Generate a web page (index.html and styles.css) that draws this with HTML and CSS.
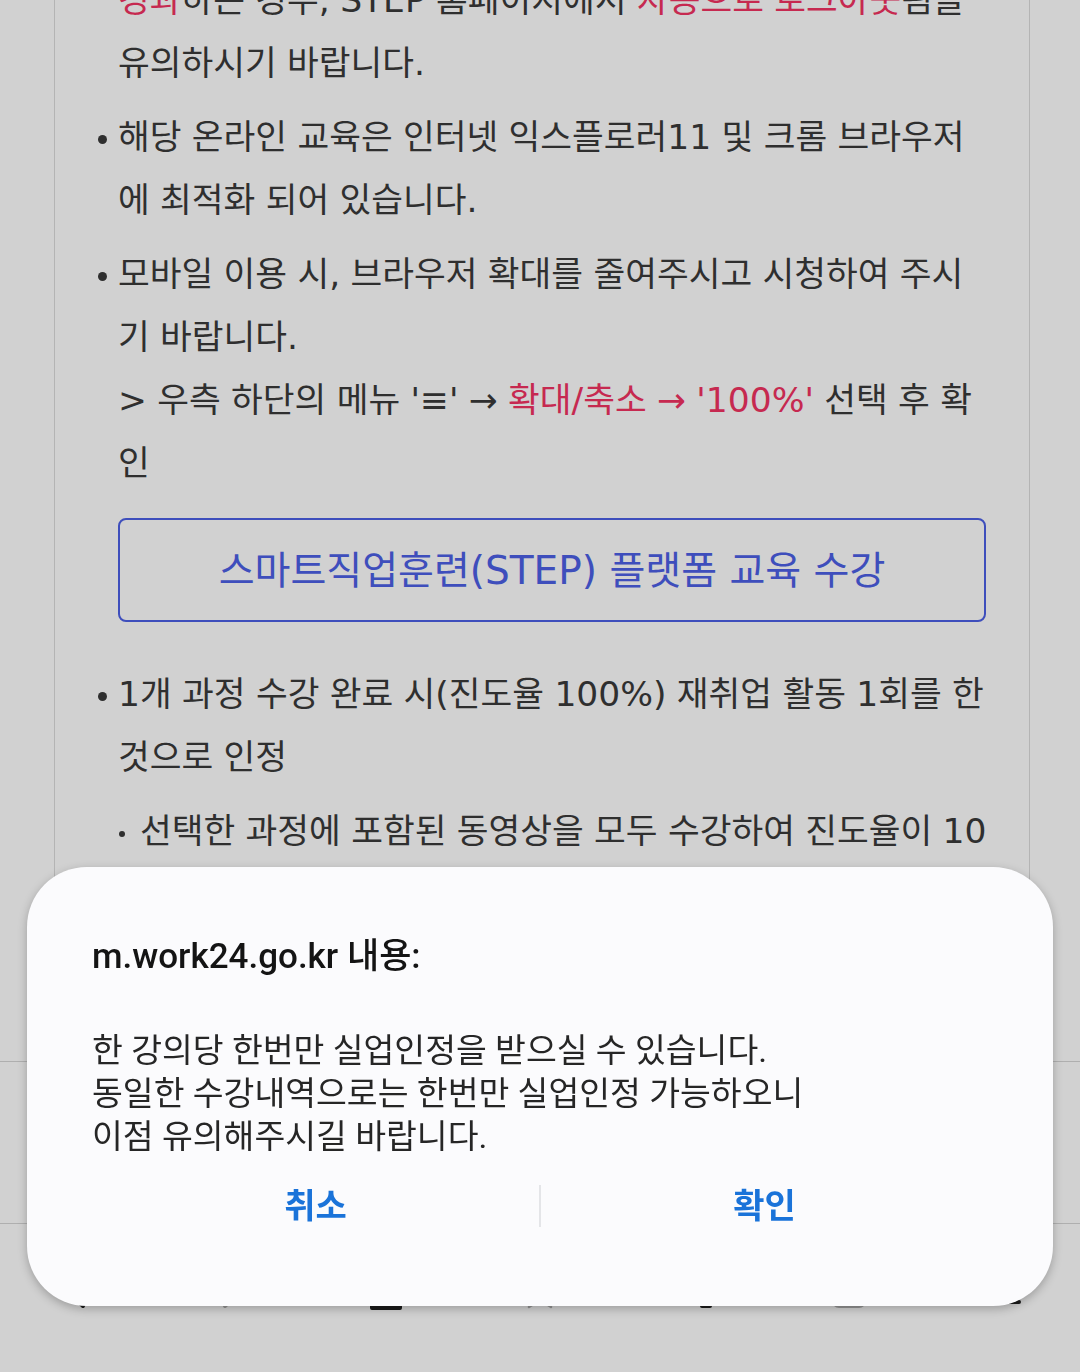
FILE: index.html
```html
<!DOCTYPE html>
<html lang="ko">

<head>
    <meta charset="UTF-8">
    <meta name="viewport" content="width=device-width, initial-scale=1.0">
    <title>스마트직업훈련 교육 수강</title>
    <link rel="stylesheet" href="styles.css">
</head>

<body>
    <div class="screen">
        <main class="page">
            <div class="guide">
                <ul class="notice">
                    <li>학습 중 아무런 동작 없이 일정 시간(60분)이<br><em>경과</em>하는 경우, STEP 홈페이지에서 <em>자동으로 로그아웃</em>됨을 유의하시기 바랍니다.</li>
                    <li>해당 온라인 교육은 인터넷 익스플로러11 및 크롬 브라우저에 최적화 되어 있습니다.</li>
                    <li>모바일 이용 시, 브라우저 확대를 줄여주시고 시청하여 주시기 바랍니다.
                        <p class="tip">&gt; 우측 하단의 메뉴 '≡' → <em>확대/축소 → '100%'</em> 선택 후 확인</p>
                    </li>
                </ul>

                <a class="btn-step" href="#">스마트직업훈련(STEP) 플랫폼 교육 수강</a>

                <ul class="notice">
                    <li>1개 과정 수강 완료 시(진도율 100%) 재취업 활동 1회를 한 것으로 인정
                        <ul class="sub">
                            <li>선택한 과정에 포함된 동영상을 모두 수강하여 진도율이 100%가 되어야 인정됩니다.</li>
                            <li>수강 완료 후 실업인정 신청 화면에서 해당 과정을 선택해 주세요.</li>
                        </ul>
                    </li>
                </ul>
            </div>
        </main>

        <!-- site bottom bar -->
        <div class="site-bar"></div>

        <!-- browser toolbar -->
        <nav class="browser-bar">
            <svg class="ico" viewBox="0 0 44 44"><path d="M28 6 L12 22 L28 38" /></svg>
            <svg class="ico off" viewBox="0 0 44 44"><path d="M16 6 L32 22 L16 38" /></svg>
            <svg class="ico" viewBox="0 0 44 44"><path d="M3 21 L22 5 L41 21 M8 17 V40 H36 V17" /></svg>
            <svg class="ico off thin" viewBox="0 0 44 44"><path d="M22 4 L27 16 L40 17 L30 26 L33 39 L22 32 L11 39 L14 26 L4 17 L17 16 Z" /></svg>
            <svg class="ico" viewBox="0 0 44 44"><path d="M18 4 V32 M8 22 L18 32 L28 22 M30 38 H38" /></svg>
            <svg class="ico off" viewBox="0 0 44 44"><rect x="7" y="7" width="30" height="31" rx="5" /></svg>
            <svg class="ico" viewBox="0 0 44 44"><path d="M6 10 H38 M6 22 H38 M6 34 H38" /></svg>
        </nav>
    </div>

    <div class="dim"></div>

    <div class="alert" role="dialog">
        <h2 class="alert-title">m.work24.go.kr 내용:</h2>
        <p class="alert-msg">한 강의당 한번만 실업인정을 받으실 수 있습니다.<br>동일한 수강내역으로는 한번만 실업인정 가능하오니<br>이점 유의해주시길 바랍니다.</p>
        <div class="alert-actions">
            <button type="button">취소</button>
            <button type="button">확인</button>
        </div>
    </div>
</body>

</html>
```

FILE: styles.css
```css
body {
    margin: 0;
    background-color: #ffffff;
    font-family: "DejaVu Sans", "Noto Sans CJK KR", sans-serif;
    color: #3a3a3a;
}

.screen {
    height: 100vh;
    display: flex;
    flex-direction: column;
}

.page {
    flex: 1;
    overflow: hidden;
}

/* bordered guide panel */
.guide {
    margin: -94px 50px 0 54px;
    padding: 0 43px 40px 41px;
    border-left: 1px solid #dcdcdc;
    border-right: 1px solid #dcdcdc;
    font-size: 34.5px;
    line-height: 63px;
    word-spacing: -0.6px;
    word-break: break-all;
}

.guide em {
    font-style: normal;
    color: #f23262;
}

.notice {
    list-style: none;
    margin: 0;
    padding: 0;
}

.notice > li {
    margin-bottom: 11px;
    padding-left: 22px;
    text-indent: -22px;
}

.notice > li::before {
    content: "";
    display: inline-block;
    width: 9px;
    height: 9px;
    margin: 0 11px 0 2px;
    border-radius: 50%;
    background-color: #3a3a3a;
    vertical-align: middle;
}

.tip {
    margin: 0;
    text-indent: 0;
}

.sub {
    list-style: none;
    margin: 11px -14px 0 0;
    padding: 0;
    text-indent: 0;
}

.sub li {
    padding-left: 22px;
    text-indent: -22px;
}

.sub li::before {
    content: "";
    display: inline-block;
    width: 6px;
    height: 6px;
    margin: 0 15px 0 1px;
    border-radius: 50%;
    background-color: #3a3a3a;
    vertical-align: middle;
}

.btn-step {
    display: flex;
    align-items: center;
    justify-content: center;
    height: 104px;
    box-sizing: border-box;
    margin: 23px 0 41px 22px;
    border: 2px solid #4c60e6;
    border-radius: 8px;
    color: #4c60e6;
    font-size: 39px;
    word-spacing: 0;
    text-decoration: none;
}

.site-bar {
    height: 161px;
    border-top: 1px solid #d6d6d6;
    background-color: #ffffff;
}

.browser-bar {
    height: 149px;
    border-top: 1px solid #d6d6d6;
    display: grid;
    grid-template-columns: repeat(7, 1fr);
    justify-items: center;
    align-items: start;
    padding-top: 44px;
    box-sizing: border-box;
    background-color: #ffffff;
}

.ico {
    width: 44px;
    height: 44px;
    fill: none;
    stroke: #222;
    stroke-width: 4;
    stroke-linecap: round;
    stroke-linejoin: round;
}

.ico.off {
    stroke: #b4b4b4;
}

.ico.thin {
    stroke-width: 2.5;
}

/* page dim under the alert */
.dim {
    position: fixed;
    inset: 0;
    background-color: rgba(0, 0, 0, 0.18);
}

.alert {
    position: fixed;
    left: 27px;
    right: 27px;
    bottom: 66px;
    padding: 67px 65px 79px;
    border-radius: 60px;
    background-color: #fbfbfd;
    box-shadow: 0 3px 10px rgba(0, 0, 0, 0.25);
    font-family: Roboto, "Noto Sans CJK KR", sans-serif;
}

.alert-title {
    margin: 0;
    font-size: 35px;
    font-weight: 500;
    line-height: 46px;
    color: #141414;
}

.alert-msg {
    margin: 49px 0 0;
    font-size: 33.5px;
    line-height: 43px;
    color: #262626;
}

.alert-actions {
    display: flex;
    margin-top: 27px;
}

.alert-actions button {
    flex: 1;
    height: 42px;
    padding: 0;
    border: none;
    background: none;
    font-family: inherit;
    font-size: 34px;
    font-weight: 700;
    line-height: 42px;
    color: #1a73d9;
    cursor: pointer;
}

.alert-actions button + button {
    border-left: 2px solid #e4e5e8;
}
```
